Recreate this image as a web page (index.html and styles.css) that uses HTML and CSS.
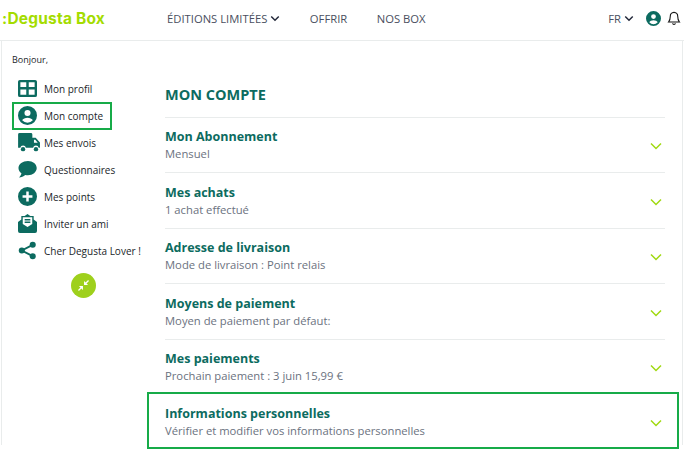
FILE: index.html
```html
<!DOCTYPE html>
<html lang="fr">
<head>
    <meta charset="UTF-8">
    <title>Degusta Box - Mon compte</title>
    <link rel="stylesheet" href="styles.css">
</head>
<body>
    <header class="topbar">
        <div class="logo">:Degusta Box</div>
        <nav class="main-nav">
            <a class="nav-link">ÉDITIONS LIMITÉES
                <svg class="caret" viewBox="0 0 12 8"><path d="M1.5 1.5 6 6l4.5-4.5" /></svg>
            </a>
            <a class="nav-link">OFFRIR</a>
            <a class="nav-link">NOS BOX</a>
        </nav>
        <div class="top-actions">
            <a class="lang">FR
                <svg class="caret" viewBox="0 0 12 8"><path d="M1.5 1.5 6 6l4.5-4.5" /></svg>
            </a>
            <svg class="user-icon" viewBox="0 0 20 20">
                <circle cx="10" cy="10" r="8" fill="#fff" />
                <path fill="#0c6b60" d="M10 0a10 10 0 1 0 0 20 10 10 0 0 0 0-20Zm0 4.2a3.2 3.2 0 1 1 0 6.4 3.2 3.2 0 0 1 0-6.4Zm0 13.4a7.7 7.7 0 0 1-5.6-2.5c.5-1.7 3.5-2.7 5.6-2.7s5.1 1 5.6 2.7a7.7 7.7 0 0 1-5.6 2.5Z" />
            </svg>
            <svg class="bell-icon" viewBox="0 0 16 18">
                <path d="M8 1.8c-2.8 0-4.5 2.1-4.5 4.8 0 3.4-.6 5-2 6.6h13c-1.4-1.6-2-3.2-2-6.6 0-2.7-1.700-4.800-4.500-4.800Z" />
                <path d="M6.200 14.800a1.900 1.900 0 0 0 3.600 0" />
                <path d="M8 .8v1" />
            </svg>
        </div>
    </header>

    <main class="account">
        <aside class="sidebar">
            <p class="hello">Bonjour,</p>
            <ul class="side-menu">
                <li class="side-item">
                    <svg class="side-icon" viewBox="0 0 20 20"><path fill="#0c6b60" d="M2 1h16a2 2 0 0 1 2 2v14a2 2 0 0 1-2 2H2a2 2 0 0 1-2-2V3a2 2 0 0 1 2-2Zm.5 2.500v5h6.200v-5Zm8.800 0v5h6.200v-5ZM2.500 11v5.500h6.200V11Zm8.800 0v5.500h6.200V11Z" /></svg>
                    Mon profil
                </li>
                <li class="side-item active">
                    <svg class="side-icon" viewBox="0 0 20 20"><path fill="#0c6b60" d="M10 0a10 10 0 1 0 0 20 10 10 0 0 0 0-20Zm0 4.2a3.2 3.2 0 1 1 0 6.4 3.2 3.2 0 0 1 0-6.4Zm0 13.4a7.7 7.7 0 0 1-5.6-2.5c.5-1.7 3.5-2.7 5.600-2.700s5.100 1 5.600 2.700a7.700 7.700 0 0 1-5.600 2.500Z" /></svg>
                    Mon compte
                </li>
                <li class="side-item">
                    <svg class="side-icon wide" viewBox="0 0 24 20"><path fill="#0c6b60" d="M1.500 0h12a1.500 1.500 0 0 1 1.500 1.500V5h3.500l4.500 5v5.500h-1.300a3 3 0 0 0-5.900 0H8.200a3 3 0 0 0-5.900 0H0V1.500A1.500 1.500 0 0 1 1.500 0Zm15.200 7v3.200h4L18 7Z" /><circle fill="#0c6b60" cx="5.200" cy="17" r="2.300" /><circle fill="#0c6b60" cx="18.800" cy="17" r="2.300" /></svg>
                    Mes envois
                </li>
                <li class="side-item">
                    <svg class="side-icon" viewBox="0 0 20 20"><path fill="#0c6b60" d="M10.500 1C5 1 .5 4.300.5 8.500c0 2.200 1.200 4.100 3.100 5.500-.3 1.700-1.200 3.200-2.500 4.500 2.500-.2 4.800-1.200 6.500-2.700 1 .2 1.900.3 2.900.3 5 0 9.200-3.300 9.200-7.600S15.500 1 10.500 1Z" /></svg>
                    Questionnaires
                </li>
                <li class="side-item">
                    <svg class="side-icon" viewBox="0 0 20 20"><path fill="#0c6b60" d="M10 0a10 10 0 1 0 0 20 10 10 0 0 0 0-20ZM8.700 4.800h2.600v3.900h3.900v2.600h-3.900v3.900H8.700v-3.900H4.800V8.700h3.900Z" /></svg>
                    Mes points
                </li>
                <li class="side-item">
                    <svg class="side-icon" viewBox="0 0 20 20"><path fill="#0c6b60" d="M10 0l3 2h3.500v3.800L20 8.300V18a2 2 0 0 1-2 2H2a2 2 0 0 1-2-2V8.300l3.500-2.500V2H7ZM5 3.500v7l5 3.200 5-3.200v-7ZM7 5.300h6v1.500H7Zm0 2.700h6v1.500H7Z" /></svg>
                    Inviter un ami
                </li>
                <li class="side-item">
                    <svg class="side-icon" viewBox="0 0 20 20"><g fill="#0c6b60"><circle cx="15.500" cy="4" r="3.200" /><circle cx="4" cy="10" r="3.200" /><circle cx="15.500" cy="16" r="3.200" /></g><path stroke="#0c6b60" stroke-width="2" fill="none" d="M15.500 4 4 10l11.500 6" /></svg>
                    Cher Degusta Lover !
                </li>
            </ul>
            <button class="collapse-btn">
                <svg viewBox="0 0 12 12"><path fill="#fff" d="M11 0l1 1-2.700 2.700L11 5.400H6.600V1l1.700 1.700ZM1 6.600h4.400V11L3.700 9.300 1 12l-1-1 2.700-2.700Z" /></svg>
            </button>
        </aside>

        <section class="content">
            <h1 class="page-title">MON COMPTE</h1>
            <div class="row">
                <div><h2>Mon Abonnement</h2><p>Mensuel</p></div>
                <svg class="row-caret" viewBox="0 0 12 8"><path d="M1 1.500 6 6.500l5-5" /></svg>
            </div>
            <div class="row">
                <div><h2>Mes achats</h2><p>1 achat effectué</p></div>
                <svg class="row-caret" viewBox="0 0 12 8"><path d="M1 1.500 6 6.500l5-5" /></svg>
            </div>
            <div class="row">
                <div><h2>Adresse de livraison</h2><p>Mode de livraison : Point relais</p></div>
                <svg class="row-caret" viewBox="0 0 12 8"><path d="M1 1.500 6 6.500l5-5" /></svg>
            </div>
            <div class="row">
                <div><h2>Moyens de paiement</h2><p>Moyen de paiement par défaut:</p></div>
                <svg class="row-caret" viewBox="0 0 12 8"><path d="M1 1.500 6 6.500l5-5" /></svg>
            </div>
            <div class="row">
                <div><h2>Mes paiements</h2><p>Prochain paiement : 3 juin 15,99 €</p></div>
                <svg class="row-caret" viewBox="0 0 12 8"><path d="M1 1.500 6 6.500l5-5" /></svg>
            </div>
            <div class="row marked">
                <div><h2>Informations personnelles</h2><p>Vérifier et modifier vos informations personnelles</p></div>
                <svg class="row-caret" viewBox="0 0 12 8"><path d="M1 1.500 6 6.500l5-5" /></svg>
            </div>
        </section>
    </main>
</body>
</html>
```

FILE: styles.css
```css
:root {
    --teal: #0c6b60;
    --lime: #a0d911;
    --mark: #17ab48;
    --line: #e9ecec;
    --nav-text: #4a4f60;
}

*, *::after {
    margin: 0;
    padding: 0;
    box-sizing: border-box;
}

html, body {
    height: 100%;
    overflow: hidden;
}

body {
    font-family: "Open Sans", sans-serif;
    background: #fff;
    color: #212529;
}

.topbar {
    height: 41px;
    display: flex;
    align-items: center;
    padding: 0 3px 4px 2px;
    border-bottom: 1px solid var(--line);
}

.logo {
    width: 165px;
    font-family: "Inter", sans-serif;
    font-size: 15.5px;
    font-weight: 700;
    letter-spacing: 0.2px;
    color: #a4dc00;
}

.main-nav {
    display: flex;
    gap: 29.5px;
    flex: 1;
}

.nav-link, .lang {
    display: flex;
    align-items: center;
    gap: 3px;
    font-size: 11.25px;
    color: var(--nav-text);
}

.caret {
    width: 10px;
    height: 7px;
    fill: none;
    stroke: #23283a;
    stroke-width: 1.8;
}

.top-actions {
    display: flex;
    align-items: center;
}

.user-icon {
    width: 15px;
    height: 15px;
    margin-left: 12px;
}

.bell-icon {
    width: 14px;
    height: 15px;
    margin-left: 6px;
    fill: none;
    stroke: #111;
    stroke-width: 1.3;
}

.account {
    display: flex;
    margin: 0 1px;
    height: 404px;
    border-left: 1px solid var(--line);
    border-right: 1px solid var(--line);
}

.sidebar {
    width: 163px;
    flex: none;
    padding: 13px 0 0 10px;
}

.hello {
    font-size: 9px;
    line-height: 12px;
    margin-bottom: 9px;
}

.side-menu {
    list-style: none;
    width: 134px;
}

.side-item {
    position: relative;
    display: flex;
    align-items: center;
    gap: 7px;
    height: 27px;
    padding-left: 6px;
    font-size: 10px;
    color: #212529;
    white-space: nowrap;
}

.side-icon {
    width: 19px;
    height: 19px;
    flex: none;
}

.side-icon.wide {
    width: 23px;
    margin-right: -4px;
}

.side-item.active::after {
    content: '';
    position: absolute;
    left: 0;
    top: 0;
    width: 100px;
    height: 28px;
    border: 2px solid var(--mark);
}

.collapse-btn {
    display: flex;
    align-items: center;
    justify-content: center;
    width: 25px;
    height: 25px;
    margin: 9px 0 0 59px;
    border: none;
    border-radius: 50%;
    background: #9ed01c;
}

.collapse-btn svg {
    width: 11px;
    height: 11px;
}

.content {
    width: 500px;
    padding-top: 44px;
}

.page-title {
    font-size: 14.5px;
    line-height: 20px;
    font-weight: 700;
    color: var(--teal);
    margin-bottom: 11.75px;
}

.row {
    position: relative;
    display: flex;
    align-items: center;
    justify-content: space-between;
    height: 55.5px;
    border-top: 1px solid var(--line);
}

.row h2 {
    font-size: 12.5px;
    line-height: 17px;
    font-weight: 700;
    color: var(--teal);
}

.row p {
    font-size: 11.25px;
    line-height: 17px;
    color: #6b7280;
}

.row-caret {
    width: 12px;
    height: 8px;
    margin: 2px 3px 0 0;
    fill: none;
    stroke: var(--lime);
    stroke-width: 1.5;
}

.row.marked {
    border-top: none;
}

.row.marked::after {
    content: '';
    position: absolute;
    left: -18px;
    right: -14px;
    top: -2px;
    height: 57px;
    border: 2px solid var(--mark);
}
```
